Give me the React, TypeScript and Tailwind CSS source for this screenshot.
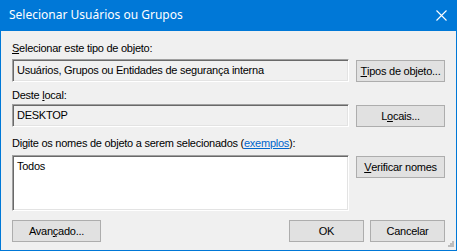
import type { ReactNode } from "react";

const sunken =
  "border border-t-[#a0a0a0] border-l-[#a0a0a0] border-b-white border-r-white shadow-[inset_1px_1px_0_#696969,inset_-1px_-1px_0_#e3e3e3]";

function Btn({ children, className = "" }: { children: ReactNode; className?: string }) {
  return (
    <div
      className={`h-[22px] flex items-center justify-center bg-[#e1e1e1] border border-[#adadad] text-black ${className}`}
    >
      {children}
    </div>
  );
}

function U({ children }: { children: ReactNode }) {
  return <span className="underline underline-offset-[1px]">{children}</span>;
}

export default function App() {
  return (
    <div className="w-[457px] h-[251px] bg-[#0078d7] px-[1px] pb-[1px] flex flex-col overflow-hidden relative">
      {/* title bar */}
      <div className="h-[31px] shrink-0 flex items-center justify-between pl-[8px] pr-[9px] text-white">
        <span className="text-[12px] font-['Noto_Sans',sans-serif] leading-none mt-[-1px]">
          Selecionar Usuários ou Grupos
        </span>
        <svg width="11" height="11" viewBox="0 0 11 11" className="mt-[-1px]">
          <path d="M0.5 0.5 L10.5 10.5 M10.5 0.5 L0.5 10.5" stroke="white" strokeWidth="1.1" />
        </svg>
      </div>

      {/* body */}
      <div className="flex-1 bg-[#f0f0f0] px-[11px] pt-[11px] text-[11px] leading-[13px] tracking-[-0.25px] text-black font-['Liberation_Sans',Arial,sans-serif]">
        <div>
          <U>S</U>elecionar este tipo de objeto:
        </div>
        <div className="flex gap-[7px] mt-[4px]">
          <div className={`w-[337px] h-[23px] bg-[#f0f0f0] pl-[4px] pt-[4px] ${sunken}`}>
            Usuários, Grupos ou Entidades de segurança interna
          </div>
          <Btn className="w-[89px] mt-[1px]">
            <U>T</U>ipos de objeto...
          </Btn>
        </div>

        <div className="mt-[7px]">
          Deste <U>l</U>ocal:
        </div>
        <div className="flex gap-[7px] mt-[2px]">
          <div className={`w-[337px] h-[23px] bg-[#f0f0f0] pl-[4px] pt-[4px] ${sunken}`}>DESKTOP</div>
          <Btn className="w-[89px] mt-[1px]">
            L<U>o</U>cais...
          </Btn>
        </div>

        <div className="mt-[10px]">
          Di<U>g</U>ite os nomes de objeto a serem selecionados (
          <span className="text-[#0066cc] underline underline-offset-[1px]">exemplos</span>):
        </div>
        <div className="flex gap-[7px] mt-[5px]">
          <div className={`w-[337px] h-[56px] bg-white pl-[4px] pt-[4px] ${sunken}`}>Todos</div>
          <Btn className="w-[89px] mt-[1px]">
            <U>V</U>erificar nomes
          </Btn>
        </div>

        <div className="flex mt-[9px]">
          <Btn className="w-[89px]">
            Avan<U>ç</U>ado...
          </Btn>
          <div className="flex-1" />
          <Btn className="w-[75px]">OK</Btn>
          <Btn className="w-[75px] ml-[6px]">Cancelar</Btn>
        </div>
      </div>

      {/* size grip */}
      <svg width="9" height="9" viewBox="0 0 9 9" className="absolute right-[3px] bottom-[3px]">
        {[
          [7, 1],
          [5, 3],
          [7, 3],
          [3, 5],
          [5, 5],
          [7, 5],
        ].map(([x, y]) => (
          <rect key={`${x}-${y}`} x={x} y={y + 1} width="2" height="2" fill="#bcbcbc" />
        ))}
      </svg>
    </div>
  );
}
